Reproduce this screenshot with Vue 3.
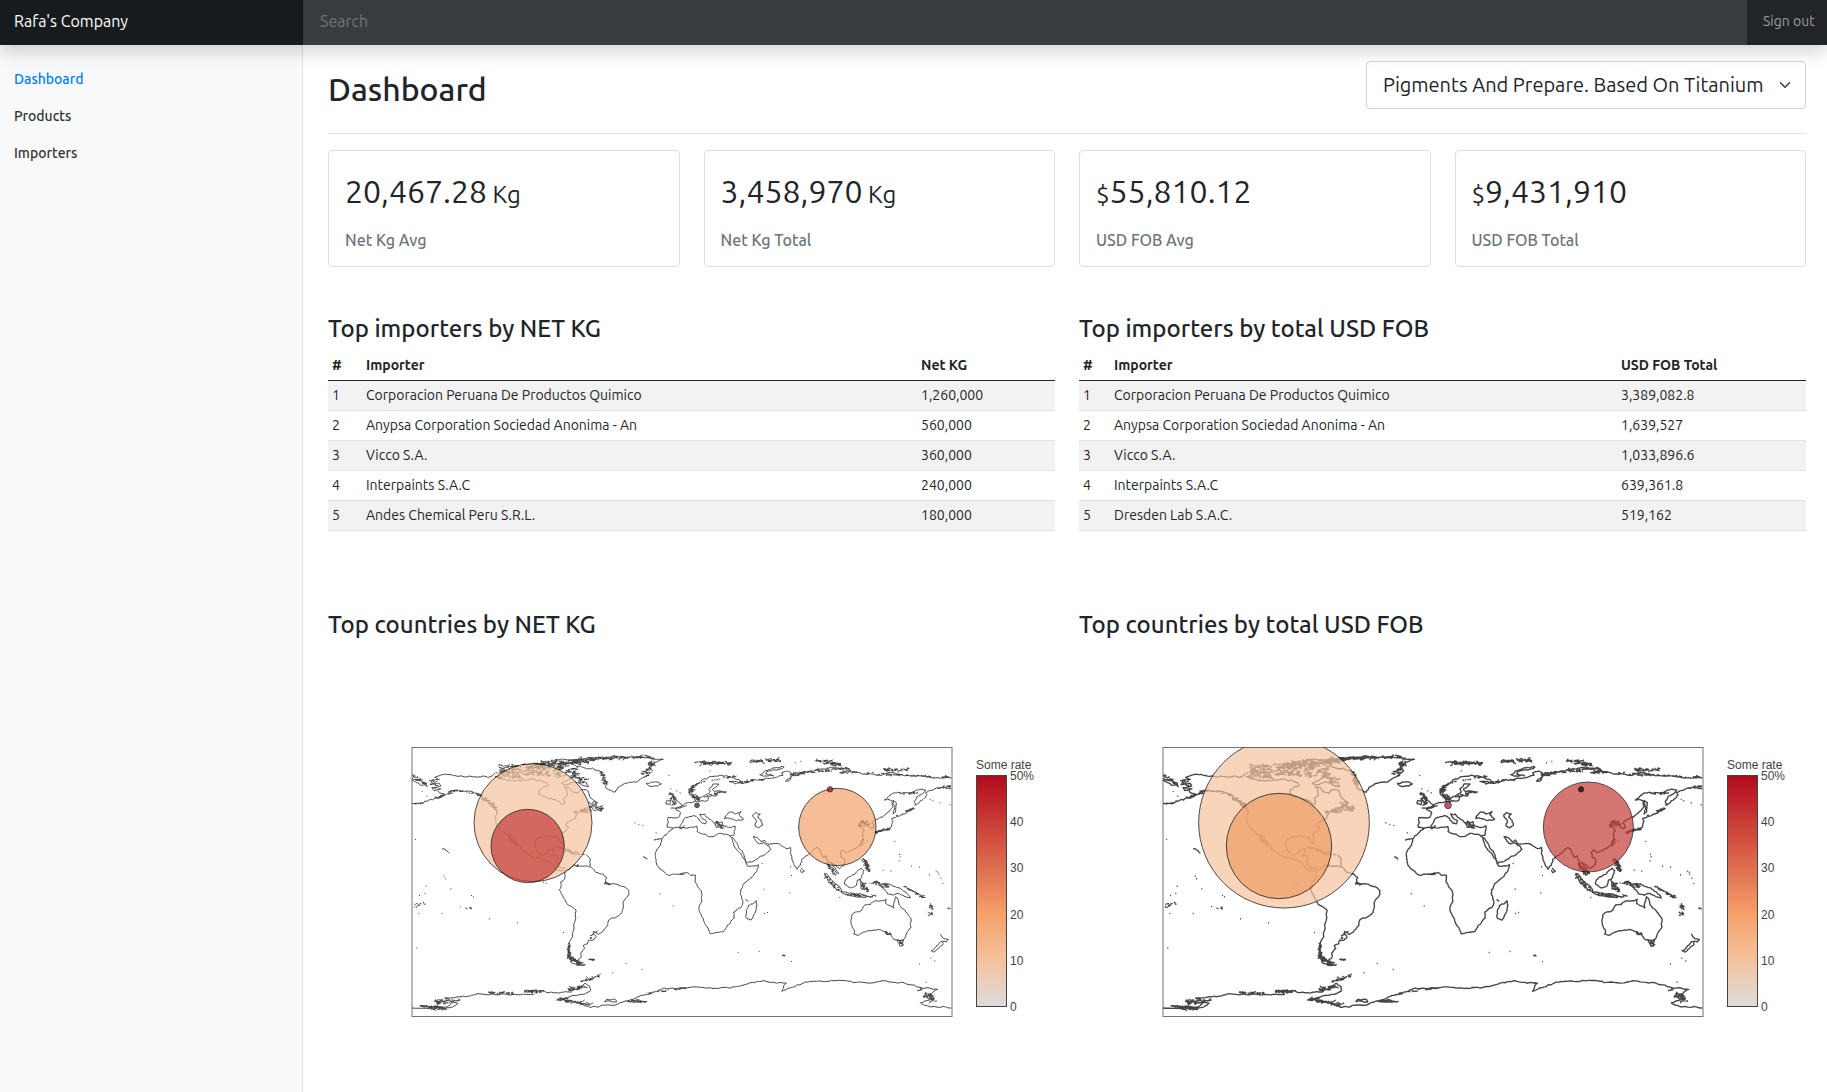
<script setup>
import { ref } from 'vue'

const links = ['Dashboard', 'Products', 'Importers']
const active = ref('Dashboard')
const product = ref('Pigments And Prepare. Based On Titanium')

const stats = [
  { value: '20,467.28', after: 'Kg', label: 'Net Kg Avg' },
  { value: '3,458,970', after: 'Kg', label: 'Net Kg Total' },
  { value: '55,810.12', before: '$', label: 'USD FOB Avg' },
  { value: '9,431,910', before: '$', label: 'USD FOB Total' },
]

const tables = [
  {
    title: 'Top importers by NET KG',
    unit: 'Net KG',
    layout: 'kg',
    rows: [
      ['Corporacion Peruana De Productos Quimico', '1,260,000'],
      ['Anypsa Corporation Sociedad Anonima - An', '560,000'],
      ['Vicco S.A.', '360,000'],
      ['Interpaints S.A.C', '240,000'],
      ['Andes Chemical Peru S.R.L.', '180,000'],
    ],
  },
  {
    title: 'Top importers by total USD FOB',
    unit: 'USD FOB Total',
    layout: 'fob',
    rows: [
      ['Corporacion Peruana De Productos Quimico', '3,389,082.8'],
      ['Anypsa Corporation Sociedad Anonima - An', '1,639,527'],
      ['Vicco S.A.', '1,033,896.6'],
      ['Interpaints S.A.C', '639,361.8'],
      ['Dresden Lab S.A.C.', '519,162'],
    ],
  },
]

// Bubbles use the map's own units: 4.5 per degree, origin at 180W 90N.
const maps = [
  {
    title: 'Top countries by NET KG',
    id: 'kg',
    line: 3,
    bubbles: [
      { x: 363, y: 227, r: 177, fill: '#f5c39d' },
      { x: 347, y: 297, r: 110, fill: '#c53d38' },
      { x: 1276, y: 240, r: 116, fill: '#f3a26b' },
      { x: 1254, y: 127, r: 8, fill: '#b20a1c' },
      { x: 855, y: 175, r: 7, fill: '#222222' },
    ],
  },
  {
    title: 'Top countries by total USD FOB',
    id: 'fob',
    line: 4,
    bubbles: [
      { x: 363, y: 227, r: 256, fill: '#f5c39d' },
      { x: 348, y: 297, r: 158, fill: '#f19d67' },
      { x: 1276, y: 240, r: 135, fill: '#c53d38' },
      { x: 1254, y: 127, r: 8, fill: '#000000' },
      { x: 855, y: 175, r: 10, fill: '#b20a1c' },
    ],
  },
]

const ticks = ['50%', '40', '30', '20', '10', '0']

// Coastlines, split at the Greenwich side of the map.
const west = [
  '22,104 32,106', '22,116 34,120 48,122 62,130 68,140 58,134 48,136 36,128 22,122',
  '80,128 84,120 104,118 90,112 98,109 126,103 150,106 190,109 220,112 236,108 250,113 262,108 270,100',
  '80,128 76,134 104,130 108,138 82,142 88,152 98,150 104,158 120,162 108,172 84,180 56,188 28,192',
  '104,172 118,166 132,158 142,152 156,150 180,154 200,154 216,160 228,166 236,180 250,184 262,200 278,210 276,216 272,230 274,250 284,264 296,276 308,286 316,300 330,316 340,322 330,306 312,284 326,292 344,316 356,334 372,346 396,352 408,354 430,364 444,374 452,388 470,392 482,392',
  '482,384 464,384 456,372 456,346 440,348 446,338 448,326 432,330 428,340 418,344 404,342 394,328 390,310 396,296 416,292 430,288 444,292 452,290 462,294 468,308 476,312 474,298 470,284 484,272 492,262 484,258 490,246 512,236 514,226 524,214 540,204 560,198 552,206 536,216 548,218 560,212 548,208',
  '560,198 576,188 566,180 556,172 548,152 530,150 520,160 504,156 492,142 478,140 486,150 488,166 476,176 480,186 474,194 464,184 440,176 416,170 402,162 404,150 414,142 430,138 426,128 408,120 380,118 350,122 320,122 296,118 270,108',
  '566,210 560,202 574,192 580,204 592,208 590,214 576,210 566,210',
  '482,122 510,110 530,120 524,130 546,128 552,140 530,134 510,126 490,134 470,130 482,122',
  '500,72 516,80 540,84 564,84 584,92 598,108 594,120 604,130 602,142 616,150 632,156 640,142 656,132 684,126 710,116 730,106 744,92 736,84 748,68 776,58 740,54 700,50 660,52 620,50 580,54 540,56 510,60 470,58 440,64 420,72',
  '724,130 740,126 760,126 770,132 760,138 734,138 724,130',
  '482,392 494,388 508,374 524,378 540,378 556,380 570,394 594,402 606,412 602,428 620,432 640,434 662,442 673,452 672,464 658,482 656,500 648,522 636,530 612,540 610,556 596,570 580,584 566,574 574,590 566,600 550,604 548,612 536,616 540,626 528,640 528,654 516,664 526,672 542,674 520,676 500,668 490,650 494,612 504,588 508,550 514,510 496,498 484,486 474,466 464,448 470,436 468,426 480,416 482,392',
  '454,322 470,322 488,328 500,334 482,332', '506,336 520,338 526,344 508,344 506,336', '532,344 540,344', '546,344 556,356 556,378',
  '806,264 788,280 772,296 768,312 756,330 752,346 756,372 764,384 780,398 796,406 820,402 840,402',
  '840,256 834,262 820,262 806,264 788,262 790,232 822,232 828,218 812,206 832,202 846,196',
  '800,196 808,190 798,176 804,160 814,176 822,186 834,196 824,202 798,204', '784,192 786,182 798,180 796,194 784,192',
  '22,804 90,806 126,808 48,798 90,800 140,802 160,790 120,774 176,768 210,764 290,762 340,764 386,764 370,752 420,754 456,758 500,756 524,742 540,730 556,740 556,754 540,762 500,768 456,780 490,776 484,786 530,790 560,802 600,796 640,792 700,770 740,760 760,752 780,744 846,744',
  '600,786 606,778 630,778 636,786 600,786', '668,784 696,778 724,786 668,784',
  '112,326 124,330 134,340', '748,300 772,296', '716,350 728,356',
]
const east = [
  '0,262 10,244 14,236 34,230 46,228 62,244 76,252 80,242 66,232 60,222 74,222 88,236 104,250 110,262 122,260 116,250 128,246 130,258 146,262 166,258 166,268 162,286 150,288 120,280 92,290 76,282 52,274 52,260 30,262 0,266',
  '134,236 150,216 166,222 184,214 178,224 192,238 170,242 152,236 134,236',
  '218,226 228,218 242,222 234,232 244,240 248,256 236,264 226,258 230,246 218,226',
  '150,288 160,308 176,334 190,354 200,372 204,378 236,374 228,398 210,416 190,436 182,450 186,470 188,496 174,506 162,516 164,534 156,540 150,552 132,574 110,578 92,582 82,560 72,542 62,520 58,500 66,480 66,460 54,440 46,426 48,406 34,406 24,398 0,402',
  '158,292 172,310 190,340 202,370 230,358 256,344 274,328 268,318 250,308 240,312 228,302 220,290 230,292 244,304 254,300 264,312 300,312 322,326 332,322 332,340 342,370 352,388 362,376 366,358 384,346 400,332 412,322 422,334 430,352 440,348 446,362 444,376 454,388 466,406 472,400 460,384 448,372 454,366 470,376 480,386 494,374 496,362 484,350 482,336 490,330 500,338 520,328 544,314 550,296 548,280 554,272 546,262 536,256 542,246 556,250 562,242 566,258 576,266 584,262 576,248 588,238 610,230 628,214 640,200 638,184 624,178 614,180 636,162 666,160 700,156 714,150 738,150 728,162 712,170 704,184 706,196 716,190 730,178 742,164 738,158 760,150 784,142 815,146',
  '640,180 650,188 648,216 640,222 644,200 640,180', '588,282 600,272 618,270 634,262 640,244 636,236 652,230', '652,230 680,220 704,204',
  '0,200 10,196 24,188 48,184 42,172 56,170 48,164 36,168 28,158 30,146 44,136 66,120 90,110 120,106 150,110 180,120 188,130 166,132 148,124 170,124 192,130 214,122 240,120 260,114 290,112 310,106 306,98 320,94 336,100 330,122 318,124 336,108 360,102 380,96 420,88 460,84 500,82 514,92 480,98 514,96 540,98 580,102 600,106 640,98 700,108 750,112 815,114',
  '312,80 280,84 254,94 240,104 260,108 282,108 258,102 262,94 286,90 314,80',
  '48,184 66,182 84,182 90,170 110,168 116,156 140,156 104,154 98,148 118,132 100,132 88,146 92,156 80,164 64,172 56,180',
  '496,420 512,410 530,396 544,384 552,392 546,412 534,420 528,438 508,442 496,434 496,420',
  '434,400 444,404 460,424 476,436 486,456 470,448 446,424 434,400', '484,456 510,460 548,464 580,470 550,472 510,466 484,456',
  '542,424 560,430 548,434 556,450 544,446 542,424',
  '590,424 604,434 618,430 640,438 664,448 678,456 692,474 670,466 652,460 640,466 624,462 612,448 590,424',
  '516,524 514,548 524,570 522,582 540,584 560,574 596,568 614,574 622,584 632,578 640,596 652,600 672,598 682,578 694,560 694,536 676,512 662,498 656,482 648,470 642,504 618,490 620,478 588,482 572,494 556,494 544,512 516,524',
  '652,600 662,604 672,600 668,618 660,618 652,600', '782,582 792,596 806,598 800,606 790,604', '788,604 790,614 762,636 754,632 776,614 788,604',
  '230,482 232,496 214,540 202,536 200,516 206,496 222,490 230,482', '364,384 374,394 366,398 362,390', '198,478 206,484',
  '550,354 562,364 560,376 572,388 566,396', '456,370 470,392 478,402',
  '0,746 60,742 100,746 150,744 180,738 214,728 250,722 290,730 320,730 306,754 328,744 350,736 390,724 440,724 500,722 520,728 600,724 660,728 710,740 774,748 760,756 736,764 742,774 764,776 722,788 734,796 780,802 815,804',
  '686,444 700,454 716,462 732,472', '752,490 760,510', '744,516 758,526',
]

// Island groups as [x1, y1, x2, y2, spread, strokes, stroke length].
const groups = [
  [272, 102, 400, 100, 28, 60, 14], [290, 84, 480, 72, 14, 70, 18], [420, 70, 560, 60, 10, 40, 22],
  [400, 90, 500, 100, 32, 50, 14], [500, 92, 548, 130, 14, 30, 12], [560, 56, 740, 52, 4, 34, 16],
  [590, 96, 602, 134, 8, 24, 8], [744, 60, 720, 106, 14, 40, 10], [224, 162, 276, 208, 8, 32, 9],
  [90, 176, 150, 152, 4, 20, 9], [494, 610, 494, 650, 5, 50, 6], [494, 652, 526, 672, 7, 46, 9],
  [556, 658, 568, 659, 3, 10, 7], [82, 118, 104, 150, 10, 16, 10], [26, 108, 64, 132, 6, 14, 10],
  [28, 192, 60, 188, 2, 8, 6], [150, 150, 224, 162, 3, 12, 6],
  [798, 158, 816, 196, 10, 24, 7], [534, 726, 582, 706, 6, 24, 10], [490, 748, 548, 740, 8, 32, 10],
  [366, 754, 420, 755, 5, 30, 9], [95, 785, 160, 785, 12, 26, 14], [256, 758, 330, 761, 3, 24, 10],
  [60, 800, 130, 804, 5, 14, 20], [460, 776, 550, 794, 6, 26, 14], [560, 185, 590, 210, 10, 16, 9],
  [506, 216, 560, 208, 8, 16, 9], [598, 428, 612, 432, 5, 14, 6], [680, 782, 720, 786, 3, 10, 12],
  [458, 322, 510, 342, 5, 12, 8], [508, 374, 522, 378, 3, 8, 6], [306, 284, 340, 318, 4, 16, 7],
  [550, 600, 576, 574, 3, 10, 5], [730, 760, 846, 744, 3, 16, 8],
  [880, 69, 976, 70, 8, 48, 12], [1036, 63, 1120, 61, 5, 30, 14], [1236, 62, 1308, 74, 8, 40, 12],
  [1440, 88, 1515, 90, 7, 28, 10], [1160, 104, 1240, 92, 9, 30, 10], [1240, 94, 1336, 84, 6, 26, 10],
  [1000, 128, 1070, 118, 5, 22, 9], [1305, 96, 1640, 112, 3, 40, 10], [870, 134, 856, 160, 5, 28, 7],
  [870, 132, 990, 108, 3, 20, 8], [866, 168, 884, 180, 8, 26, 6], [932, 246, 952, 262, 9, 38, 5],
  [1378, 360, 1392, 392, 8, 44, 7], [1368, 422, 1386, 456, 8, 24, 7], [1396, 424, 1450, 440, 12, 36, 8],
  [1330, 464, 1412, 467, 4, 28, 9], [1260, 404, 1300, 450, 6, 22, 8], [1498, 440, 1560, 472, 5, 22, 9],
  [1410, 276, 1462, 266, 5, 26, 8], [1370, 318, 1380, 290, 4, 10, 4], [1444, 576, 1454, 584, 4, 14, 6],
  [1482, 604, 1496, 614, 4, 10, 6], [1270, 374, 1290, 402, 4, 14, 7], [1550, 748, 1590, 784, 9, 20, 16],
  [1480, 226, 1530, 202, 2, 14, 7], [1608, 144, 1636, 138, 4, 10, 10], [160, 500, 210, 506, 5, 8, 4],
  [26, 500, 60, 490, 14, 16, 4], [1134, 646, 1144, 648, 2, 8, 5], [1628, 506, 1636, 504, 4, 4, 4],
  [1576, 490, 1586, 520, 6, 8, 6], [900, 170, 940, 160, 4, 14, 8], [1360, 256, 1400, 252, 6, 14, 7],
  [1480, 164, 1550, 156, 3, 12, 8], [1570, 526, 1584, 520, 4, 8, 6], [1370, 242, 1384, 250, 6, 12, 6],
]

const specks = [
  [32, 298], [52, 154], [66, 168], [118, 408], [122, 416], [138, 446], [200, 466], [206, 470], [44, 466], [60, 460],
  [64, 438], [112, 520], [42, 520], [254, 536], [338, 548], [36, 624], [476, 577], [416, 426], [424, 429], [664, 670],
  [712, 688], [624, 698], [586, 702], [690, 248], [702, 253], [714, 256], [754, 278], [766, 461], [805, 497], [792, 106],
  [798, 146], [816, 152], [826, 158], [718, 352], [724, 356], [752, 298], [760, 298], [1000, 637], [1063, 634],
  [1160, 664], [1078, 447], [1079, 520], [1088, 517], [1155, 458], [1160, 406], [1157, 380], [1072, 370], [1305, 472],
  [1470, 304], [1484, 343], [1486, 350], [1483, 362], [1435, 390], [1458, 393], [1520, 378], [1544, 381], [1594, 393],
  [1600, 396], [1608, 414], [1614, 430], [1602, 402], [1574, 404], [1544, 671], [1590, 662], [1578, 654], [1564, 726],
  [1576, 178], [1584, 182], [1606, 188], [1636, 194], [1172, 68], [1188, 64], [916, 92], [1378, 308], [1386, 302],
]

let seed = 7
const rand = () => {
  seed = (seed * 16807) % 2147483647
  return seed / 2147483647 - 0.5
}

// Splits every segment a few times and nudges the new points, for a natural shoreline.
function shoreline(text, shift) {
  let pts = text.split(' ').map((p) => p.split(',').map(Number))
  for (let pass = 0; pass < 3; pass++) {
    const next = [pts[0]]
    for (let i = 1; i < pts.length; i++) {
      const [ax, ay] = pts[i - 1]
      const [bx, by] = pts[i]
      const len = Math.hypot(bx - ax, by - ay)
      if (len > 5) {
        const k = Math.min(len * 0.3, 5)
        next.push([(ax + bx) / 2 + rand() * k, (ay + by) / 2 + rand() * k])
      }
      next.push(pts[i])
    }
    pts = next
  }
  return 'M' + pts.map(([x, y]) => `${(x + shift).toFixed(1)} ${y.toFixed(1)}`).join('L')
}

function islands([x1, y1, x2, y2, spread, count, size]) {
  let d = ''
  for (let i = 0; i < count; i++) {
    const t = rand() + 0.5
    const x = x1 + (x2 - x1) * t + rand() * spread * 0.6
    const y = y1 + (y2 - y1) * t + rand() * spread
    d += `M${x.toFixed(1)} ${y.toFixed(1)}l${(rand() * size * 2).toFixed(1)} ${(rand() * size * 0.6).toFixed(1)}`
    d += `l${(rand() * size).toFixed(1)} ${(rand() * size * 0.7).toFixed(1)}`
  }
  return d
}

const coast = [
  ...west.map((t) => shoreline(t, 0)),
  ...east.map((t) => shoreline(t, 825)),
  ...groups.map(islands),
  ...specks.map(([x, y]) => `M${x - 1} ${y}l3 1`),
].join('')
</script>

<template>
  <div class="app">
    <header class="topbar">
      <a class="brand" href="#">Rafa's Company</a>
      <input class="search" type="text" placeholder="Search" aria-label="Search" />
      <a class="signout" href="#">Sign out</a>
    </header>

    <div class="body">
      <nav class="sidebar">
        <a
          v-for="l in links"
          :key="l"
          href="#"
          :class="{ active: l === active }"
          @click.prevent="active = l"
        >{{ l }}</a>
      </nav>

      <main class="main">
        <div class="heading">
          <h1>Dashboard</h1>
          <div class="picker">
            <select v-model="product" aria-label="Product">
              <option>Pigments And Prepare. Based On Titanium</option>
            </select>
            <svg viewBox="0 0 16 16" aria-hidden="true">
              <path d="M2 5l6 6 6-6" fill="none" stroke="#343a40" stroke-width="2" stroke-linecap="round" stroke-linejoin="round" />
            </svg>
          </div>
        </div>

        <section class="stats">
          <article v-for="s in stats" :key="s.label" class="card">
            <p class="figure"><small v-if="s.before">{{ s.before }}</small>{{ s.value }}<small v-if="s.after">&nbsp;{{ s.after }}</small></p>
            <h2>{{ s.label }}</h2>
          </article>
        </section>

        <div class="pair tables">
          <section v-for="t in tables" :key="t.title">
            <h3>{{ t.title }}</h3>
            <table :class="t.layout">
              <thead>
                <tr><th class="num">#</th><th>Importer</th><th class="amount">{{ t.unit }}</th></tr>
              </thead>
              <tbody>
                <tr v-for="(r, i) in t.rows" :key="r[0]">
                  <td>{{ i + 1 }}</td><td>{{ r[0] }}</td><td>{{ r[1] }}</td>
                </tr>
              </tbody>
            </table>
          </section>
        </div>

        <div class="pair">
          <section v-for="m in maps" :key="m.id">
            <h3>{{ m.title }}</h3>
            <svg class="map" viewBox="0 0 727 272" role="img" :aria-label="m.title">
              <defs>
                <linearGradient :id="'scale-' + m.id" x1="0" y1="1" x2="0" y2="0">
                  <stop offset="0" stop-color="rgb(220,220,220)" />
                  <stop offset="0.2" stop-color="rgb(245,195,157)" />
                  <stop offset="0.4" stop-color="rgb(245,160,105)" />
                  <stop offset="1" stop-color="rgb(178,10,28)" />
                </linearGradient>
              </defs>
              <svg x="84" y="0" width="540" height="270" viewBox="0 0 1620 810">
                <path :d="coast" transform="translate(-22 -21)" fill="none" stroke="#444" :stroke-width="m.line" stroke-linejoin="round" />
                <circle
                  v-for="(b, i) in m.bubbles"
                  :key="i"
                  :cx="b.x"
                  :cy="b.y"
                  :r="b.r"
                  :fill="b.fill"
                  stroke="#000"
                  stroke-width="3"
                  opacity="0.7"
                />
              </svg>
              <rect x="84" y="0.5" width="540" height="269" fill="none" stroke="#444" stroke-opacity="0.75" />
              <rect x="648.5" y="28.5" width="30" height="231" :fill="`url(#scale-${m.id})`" stroke="#444" />
              <text x="648" y="22">Some rate</text>
              <text v-for="(t, i) in ticks" :key="t" x="682" :y="Math.round(33 + i * 46.2)">{{ t }}</text>
            </svg>
          </section>
        </div>
      </main>
    </div>
  </div>
</template>

<style>
body {
  margin: 0;
  background: #fff;
}
</style>

<style scoped>
.app {
  min-height: 100vh;
  display: flex;
  flex-direction: column;
  font: 400 16px/24px Ubuntu, Roboto, sans-serif;
  color: #212529;
}

.app *,
.app {
  box-sizing: border-box;
}

a {
  text-decoration: none;
}

h1,
h2,
h3,
p {
  margin: 0;
  font-weight: 500;
}

.topbar {
  position: relative;
  z-index: 1;
  display: flex;
  height: 45px;
  background: #212529;
  box-shadow: 0 8px 16px rgba(0, 0, 0, 0.15);
}

.brand {
  width: 303px;
  padding: 9px 14px;
  color: #fff;
  background: rgba(0, 0, 0, 0.25);
  box-shadow: inset -1px 0 0 rgba(0, 0, 0, 0.25);
}

.search {
  flex: 1;
  min-width: 0;
  padding: 9px 17px 12px;
  border: 0;
  border-radius: 0;
  background: #393c3e;
  color: #fff;
  font: inherit;
  outline: 0;
}

.search::placeholder {
  color: #6c757d;
  opacity: 1;
}

.signout {
  width: 80px;
  padding: 9px 0 9px 16px;
  font-size: 14px;
  color: #9b9d9e;
}

.body {
  flex: 1;
  display: flex;
}

.sidebar {
  width: 303px;
  padding-top: 16px;
  background: #f8f9fa;
  border-right: 1px solid #dedfe0;
}

.sidebar a {
  display: block;
  padding: 8px 14px;
  font-size: 14px;
  line-height: 21px;
  font-weight: 500;
  color: #333;
}

.sidebar a.active {
  color: #007bff;
}

.main {
  flex: 1;
  min-width: 0;
  padding: 16px 21px 0 25px;
}

.heading {
  display: flex;
  justify-content: space-between;
  height: 73px;
  margin-bottom: 16px;
  border-bottom: 1px solid #dee2e6;
}

h1 {
  padding-top: 9px;
  font-size: 32px;
  line-height: 38px;
}

.picker {
  position: relative;
  height: 48px;
}

select {
  appearance: none;
  width: 440px;
  height: 48px;
  padding: 0 36px 0 16px;
  border: 1px solid #ced4da;
  border-radius: 4px;
  background: #fff;
  color: #212529;
  font: inherit;
  font-size: 20px;
}

.picker svg {
  position: absolute;
  right: 15px;
  top: 18px;
  width: 12px;
  height: 12px;
  pointer-events: none;
}

.stats {
  display: grid;
  grid-template-columns: repeat(4, 1fr);
  gap: 24px;
  margin-bottom: 44px;
}

.card {
  height: 117px;
  padding: 21px 16px 0;
  border: 1px solid #dfdfdf;
  border-radius: 4px;
}

.figure {
  font-size: 32px;
  line-height: 38px;
  font-weight: 400;
}

.figure small {
  font-size: 24px;
}

.card h2 {
  margin-top: 14px;
  font-size: 16px;
  line-height: 24px;
  color: #6c757d;
}

.pair {
  display: grid;
  grid-template-columns: repeat(2, minmax(0, 1fr));
  gap: 24px;
}

.tables {
  margin-bottom: 76px;
}

h3 {
  padding-top: 3px;
  font-size: 24px;
  line-height: 29px;
}

table {
  width: 100%;
  margin-top: 8px;
  border-collapse: separate;
  border-spacing: 0;
  table-layout: fixed;
  font-size: 14px;
  line-height: 21px;
}

th,
td {
  height: 30px;
  padding: 4px;
  text-align: left;
  border-bottom: 1px solid #dee2e6;
}

th {
  font-weight: 700;
  border-bottom-color: #212529;
}

tbody tr:nth-child(odd) {
  background: #f2f2f2;
}

.kg .num {
  width: 34px;
}

.kg .amount {
  width: 138px;
}

.fob .num {
  width: 31px;
}

.fob .amount {
  width: 189px;
}

.map {
  display: block;
  width: 100%;
  margin-top: 108px;
}

.map text {
  font: 12px "Liberation Sans", Arial, sans-serif;
  fill: #444;
}
</style>
